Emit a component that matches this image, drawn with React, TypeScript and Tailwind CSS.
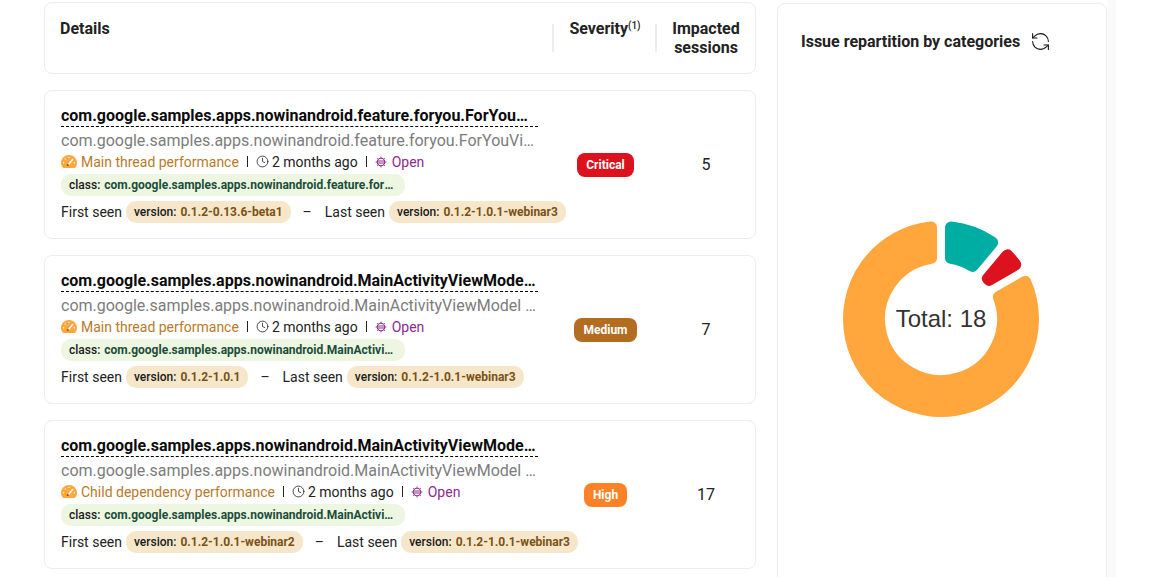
import React from 'react';
import { Clock, RefreshCcw } from 'lucide-react';

interface Issue {
  title: string;
  subtitle: string;
  category: string;
  age: string;
  className: string;
  firstVersion: string;
  lastVersion: string;
  severity: 'Critical' | 'Medium' | 'High';
  sessions: number;
}

const issues: Issue[] = [
  {
    title: 'com.google.samples.apps.nowinandroid.feature.foryou.ForYouViewModel',
    subtitle: 'com.google.samples.apps.nowinandroid.feature.foryou.ForYouViewModel',
    category: 'Main thread performance',
    age: '2 months ago',
    className: 'com.google.samples.apps.nowinandroid.feature.foryou.ForYouViewModel',
    firstVersion: '0.1.2-0.13.6-beta1',
    lastVersion: '0.1.2-1.0.1-webinar3',
    severity: 'Critical',
    sessions: 5,
  },
  {
    title: 'com.google.samples.apps.nowinandroid.MainActivityViewModel.uiState',
    subtitle: 'com.google.samples.apps.nowinandroid.MainActivityViewModel uiState',
    category: 'Main thread performance',
    age: '2 months ago',
    className: 'com.google.samples.apps.nowinandroid.MainActivityViewModel',
    firstVersion: '0.1.2-1.0.1',
    lastVersion: '0.1.2-1.0.1-webinar3',
    severity: 'Medium',
    sessions: 7,
  },
  {
    title: 'com.google.samples.apps.nowinandroid.MainActivityViewModel.uiState',
    subtitle: 'com.google.samples.apps.nowinandroid.MainActivityViewModel uiState',
    category: 'Child dependency performance',
    age: '2 months ago',
    className: 'com.google.samples.apps.nowinandroid.MainActivityViewModel',
    firstVersion: '0.1.2-1.0.1-webinar2',
    lastVersion: '0.1.2-1.0.1-webinar3',
    severity: 'High',
    sessions: 17,
  },
];

function SeverityBadge({ severity }: { severity: Issue['severity'] }) {
  const color =
    severity === 'Critical' ? 'bg-[#dc121e]' : severity === 'Medium' ? 'bg-[#b26d21]' : 'bg-[#ff8126]';
  return (
    <span className={`${color} rounded-lg px-[9px] h-6 flex items-center text-white text-xs font-bold`}>{severity}</span>
  );
}

function GaugeIcon() {
  return (
    <svg width="16" height="13" viewBox="0 0 16 13" className="shrink-0">
      <path
        d="M8 0C3.6 0 0 3.5 0 7.8c0 1.7.5 3.3 1.5 4.5.3.4.7.7 1.2.7h10.6c.5 0 .9-.3 1.2-.7 1-1.2 1.5-2.8 1.5-4.5C16 3.5 12.4 0 8 0Z"
        fill="#ffa63d"
      />
      <circle cx="2.6" cy="7.8" r=".7" fill="#fff" />
      <circle cx="4.2" cy="4" r=".7" fill="#fff" />
      <circle cx="8" cy="2.4" r=".7" fill="#fff" />
      <circle cx="13.4" cy="7.8" r=".7" fill="#fff" />
      <path d="M6.8 10.4 11.6 4.6" stroke="#fff" strokeWidth="1.5" strokeLinecap="round" />
      <circle cx="6.8" cy="10.2" r="1.1" fill="#8a5a20" />
    </svg>
  );
}

function BugIcon() {
  return (
    <svg width="12" height="12" viewBox="0 0 12 12" className="shrink-0" fill="none" stroke="#8e2a8b" strokeWidth="1.1">
      <circle cx="6" cy="6" r="3.7" />
      <path d="M3 5h6M3 7h6" strokeWidth="1" />
      <path d="M6 .6v1.6M6 9.8v1.6M.6 6h1.6M9.8 6h1.6M2.2 2.2l1.1 1.1M9.8 2.2 8.7 3.3M2.2 9.8l1.1-1.1M9.8 9.8 8.7 8.7" strokeWidth=".9" />
    </svg>
  );
}

function Chip({ label, value, tone }: { label: string; value: string; tone: 'class' | 'version' }) {
  const isClass = tone === 'class';
  return (
    <span
      className={`flex items-center h-[22px] rounded-[10px] text-xs font-bold whitespace-nowrap ${
        isClass ? 'bg-[#edf6e1] px-2 w-[344px]' : 'bg-[#f6e7cb] px-2 shrink-0'
      }`}
    >
      <span className="text-[#1a1a1a] shrink-0 font-medium mr-[4px]">{label}</span>
      <span className={isClass ? 'text-[#1b4d3a] truncate' : 'text-[#7a5215]'}>{value}</span>
    </span>
  );
}

function Divider() {
  return <span className="block w-px h-[11px] bg-[#222] shrink-0 mx-2" />;
}

function IssueRow({ issue }: { issue: Issue }) {
  return (
    <div className="flex items-center border border-[#ececec] rounded-lg h-[149px] pl-4 bg-white">
      <div className="w-[491px] shrink-0 flex flex-col items-start whitespace-nowrap pb-[1px]">
        <div className="w-[477px] truncate text-base font-bold text-[#0c0c0c] leading-[19px] border-b border-dashed border-black pb-px">
          {issue.title}
        </div>
        <div className="w-[477px] truncate text-base text-[#7c7c7c] leading-5 mt-[4px]">{issue.subtitle}</div>
        <div className="flex items-center text-sm leading-5 mt-[1px] h-5">
          <GaugeIcon />
          <span className="text-[#b97a27] ml-1">{issue.category}</span>
          <Divider />
          <Clock size={13} strokeWidth={1.5} className="text-[#222] shrink-0" />
          <span className="text-[#222] ml-[3px]">{issue.age}</span>
          <Divider />
          <BugIcon />
          <span className="text-[#8e2a8b] ml-[5px]">Open</span>
        </div>
        <div className="mt-[2px]">
          <Chip label="class:" value={issue.className} tone="class" />
        </div>
        <div className="flex items-center text-sm text-[#222] mt-[5px] h-[22px]">
          <span>First seen</span>
          <span className="ml-1"><Chip label="version:" value={issue.firstVersion} tone="version" /></span>
          <span className="ml-[12px] mr-[13px]">–</span>
          <span>Last seen</span>
          <span className="ml-1"><Chip label="version:" value={issue.lastVersion} tone="version" /></span>
        </div>
      </div>
      <div className="w-[105px] shrink-0 flex justify-center pl-[2px]">
        <SeverityBadge severity={issue.severity} />
      </div>
      <div className="flex-1 text-center text-base text-[#222]">{issue.sessions}</div>
    </div>
  );
}

// ring segment with rounded corners: a fill plus a round-joined stroke of the same colour
function arcPath(startDeg: number, endDeg: number, outer: number, inner: number, gap: number) {
  const pt = (r: number, deg: number) => {
    const a = ((deg - 90) * Math.PI) / 180;
    return `${(100 + r * Math.cos(a)).toFixed(2)} ${(100 + r * Math.sin(a)).toFixed(2)}`;
  };
  const toDeg = (r: number) => ((gap / r) * 180) / Math.PI;
  const large = endDeg - startDeg > 180 ? 1 : 0;
  return [
    `M${pt(outer, startDeg + toDeg(outer))}`,
    `A${outer} ${outer} 0 ${large} 1 ${pt(outer, endDeg - toDeg(outer))}`,
    `L${pt(inner, endDeg - toDeg(inner))}`,
    `A${inner} ${inner} 0 ${large} 0 ${pt(inner, startDeg + toDeg(inner))}`,
    'Z',
  ].join(' ');
}

function Donut() {
  const segments = [
    { start: 0, end: 40, color: '#00ada3' },
    { start: 40, end: 60, color: '#dc121e' },
    { start: 60, end: 360, color: '#ffa63d' },
  ];
  return (
    <div className="relative w-[200px] h-[200px]">
      <svg width="200" height="200" viewBox="0 0 200 200">
        {segments.map((s) => (
          <path
            key={s.color}
            d={arcPath(s.start, s.end, 92, 62, 10)}
            fill={s.color}
            stroke={s.color}
            strokeWidth="12"
            strokeLinejoin="round"
          />
        ))}
      </svg>
      <div className="absolute inset-0 flex items-center justify-center text-[24px] text-[#333] font-['Liberation_Sans',sans-serif]">
        Total: 18
      </div>
    </div>
  );
}

export default function App() {
  return (
    <div className="h-[577px] overflow-hidden bg-white flex font-['Roboto',sans-serif]">
      <div className="w-[712px] ml-[44px] mt-[2px] shrink-0 flex flex-col gap-4">
        <div className="flex border border-[#ececec] rounded-lg h-[72px]">
          <div className="w-[507px] shrink-0 pl-[15px] pt-[16px] text-base font-bold leading-[19px] text-[#222]">Details</div>
          <div className="w-[105px] shrink-0 mt-[21px] h-[28px] border-x-2 border-[#ececec] text-center text-base font-bold leading-[19px] text-[#222]">
            <div className="-mt-[5px] pl-[1px]">
              Severity<sup className="text-[10px] font-medium">(1)</sup>
            </div>
          </div>
          <div className="flex-1 pt-[16px] text-center text-base font-bold leading-[19px] text-[#222]">
            Impacted
            <br />
            sessions
          </div>
        </div>
        {issues.map((issue, i) => (
          <IssueRow key={i} issue={issue} />
        ))}
      </div>
      <div className="w-[330px] ml-[21px] mt-[3px] h-[620px] shrink-0 border border-[#ececec] rounded-lg flex flex-col">
        <div className="flex items-center pl-[23px] pt-[27px] text-base font-bold leading-5 text-[#222]">
          Issue repartition by categories
          <RefreshCcw size={21} strokeWidth={1.2} className="ml-[10px] text-[#111]" />
        </div>
        <div className="ml-[63px] mt-[167px]">
          <Donut />
        </div>
      </div>
      <div className="w-[9px] bg-[#fafafa] shrink-0" />
    </div>
  );
}
